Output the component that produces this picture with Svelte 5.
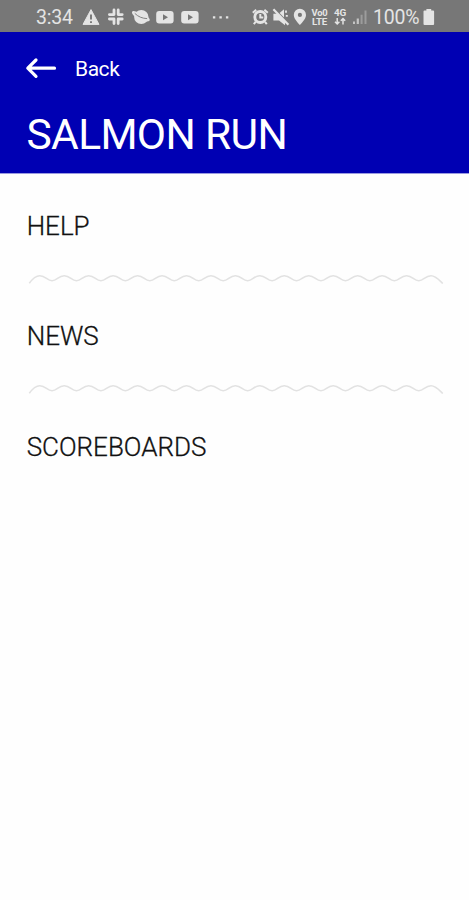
<script lang="ts">
  const items = ["HELP", "NEWS", "SCOREBOARDS"];

  const period = 24.45;
  const humps = 16;

  // A row of soft humps; both ends run a little below the troughs.
  function wavePath(): string {
    let d = "M1.3 10.3 C4 6.5 7 2.8 11.8 2.8";
    for (let i = 0; i < humps; i++) {
      const x = 11.8 + i * period;
      const mid = x + period / 2;
      const next = x + period;
      d += ` C${x + 6} 2.8 ${mid - 5} 7.8 ${mid} 7.8 S${next - 6} 2.8 ${next} 2.8`;
    }
    return d + " C407.8 2.8 412 8 414.8 10.5";
  }

  const wave = wavePath();
</script>

<div class="screen">
  <div class="status">
    <span class="time">3:34</span>
    <div class="notifications">
      <svg viewBox="0 0 20 20"><path d="M10 2.6 18 17.4H2Z" fill="currentColor" stroke="currentColor" stroke-linejoin="round" /><path d="M10 7.5v5M10 14.3v1.7" stroke="#777" stroke-width="1.9" /></svg>
      <svg viewBox="0 0 20 20" class="line"><path d="M8 3v4.6M3.4 7.6H8M12.2 3v4.6M12.2 7.6h4M3.4 12H8M8 12v4.6M12.2 12h4M12.2 12v4.6" stroke-width="2.8" stroke-linecap="round" /></svg>
      <svg viewBox="0 0 20 20"><ellipse cx="10.3" cy="10" rx="7.2" ry="7" fill="currentColor" /><path d="M4.8 4.6C2 3.2-.2 4.6 1.6 7.3c2.8 4 9.2 7.3 14.6 7.2 3.2-.1 3.2-2.3 1-4.3" fill="currentColor" /><path d="M3.8 6.4c3.5 3.4 7.5 5 12.3 5.2" fill="none" stroke="#777" stroke-width="0.9" /></svg>
      {#each [0, 1] as i (i)}
        <svg viewBox="0 0 20 20"><rect x="1.2" y="4" width="17.4" height="12.4" rx="3" fill="currentColor" /><path d="M8 7.3v6l5-3Z" fill="#777" /></svg>
      {/each}
      <svg viewBox="0 0 20 20" class="more"><path d="M1.9 9.2h2.4v2.4H1.9zM8.4 9.2h2.4v2.4H8.4zM14.9 9.2h2.4v2.4h-2.4z" fill="currentColor" /></svg>
    </div>
    <div class="system">
      <svg viewBox="0 0 20 20" class="line"><circle cx="9.3" cy="10" r="5.5" stroke-width="2.9" /><path d="M9.3 7v3.6h3M1.8 5.8l3.4-3M13.4 2.8l3.4 3M4.6 14.8l-1.8 2.4M14 14.8l1.8 2.4" stroke-width="2" /></svg>
      <svg viewBox="0 0 20 20"><path d="M2.4 6.8H7l7 7v4.4L8 13.4H2.4ZM8.6 6 13 2.2v8.2Z" fill="currentColor" /><path d="m2.4 2.3 15 15.4" stroke="currentColor" stroke-width="2.2" /><path d="M15 3.5v2.2M14.8 8.8h2" fill="none" stroke="currentColor" stroke-width="1.8" /></svg>
      <svg viewBox="0 0 20 20"><path fill-rule="evenodd" d="M8.9 1.8A6.1 6.1 0 0 0 2.8 7.9c0 4.3 6.1 10 6.1 10S15 12.2 15 7.9a6.1 6.1 0 0 0-6.1-6.1Zm0 4a2.1 2.1 0 1 1 0 4.2 2.1 2.1 0 0 1 0-4.2Z" fill="currentColor" /></svg>
      <svg viewBox="0 0 20 20" class="tiny"><text x="0.5" y="8.8" textLength="16" lengthAdjust="spacingAndGlyphs">Vo0</text><text x="1" y="17.8" textLength="15" lengthAdjust="spacingAndGlyphs">LTE</text></svg>
      <svg viewBox="0 0 20 20" class="tiny"><text x="3" y="9" textLength="12" lengthAdjust="spacingAndGlyphs">4G</text><path d="M6.2 11v6M4 14.8 6.2 17l2.2-2.2M12 17.5v-6M9.8 13.7l2.2-2.2 2.2 2.2" fill="none" stroke="currentColor" stroke-width="1.5" /></svg>
      <svg viewBox="0 0 20 20" class="signal"><path d="M1 14.5h2V17H1zM4.7 11.5h2.2V17H4.7z" fill="#c4c4c4" /><path d="M8.6 7.8h2V17h-2zM12.5 3.5h2V17h-2z" fill="#9c9c9c" /></svg>
    </div>
    <span class="percent">100%</span>
    <svg viewBox="0 0 12 18" class="battery"><path d="M3.4 1h4.8v1.6h1.9a1 1 0 0 1 1 1V16a1 1 0 0 1-1 1H1.5a1 1 0 0 1-1-1V3.6a1 1 0 0 1 1-1h1.9Z" fill="currentColor" /></svg>
  </div>

  <header>
    <div class="back">
      <svg viewBox="0 0 32 22" class="arrow"><path d="M29.5 11.2H3.5M11 3 2.8 11.2l8.2 8.2" /></svg>
      <span>Back</span>
    </div>
    <h1>SALMON RUN</h1>
  </header>

  <main>
    {#each items as item, i (item)}
      <div class="item">{item}</div>
      {#if i < items.length - 1}
        <svg class="wave" viewBox="0 0 416 12"><path d={wave} /></svg>
      {/if}
    {/each}
  </main>
</div>

<style>
  :global(body) {
    background: #fefefe;
  }
  .screen {
    height: 900px;
    overflow: hidden;
    font-family: Roboto, sans-serif;
    color: #111;
  }
  .status {
    box-sizing: border-box;
    display: flex;
    align-items: center;
    height: 32px;
    padding: 2px 0 0 36px;
    background: #777;
    color: #e4e4e4;
    font-size: 19.5px;
    letter-spacing: -0.2px;
  }
  .status svg {
    flex: none;
    width: 20px;
    height: 20px;
  }
  .status .line {
    fill: none;
    stroke: currentColor;
  }
  .time {
    width: 45px;
    flex: none;
  }
  .notifications {
    display: flex;
    gap: 4.8px;
    width: 170px;
    flex: none;
  }
  .notifications .more {
    margin-left: 6px;
  }
  .system {
    display: flex;
    width: 122px;
    flex: none;
  }
  .tiny {
    fill: currentColor;
    font-size: 9px;
    font-weight: 700;
  }
  .system .signal {
    margin-left: 1px;
  }
  .percent {
    width: 50px;
    flex: none;
  }
  .status .battery {
    width: 12px;
    height: 18px;
  }
  header {
    box-sizing: border-box;
    height: 142px;
    padding: 22px 26px 0;
    background: #0000b3;
    border-bottom: 1px solid #9a9ae0;
    color: #fff;
  }
  .back {
    display: flex;
    align-items: center;
    height: 28px;
    font-size: 21px;
    letter-spacing: -0.45px;
  }
  .arrow {
    width: 32px;
    height: 22px;
    margin: 0 18px 0 -1px;
    fill: none;
    stroke: #fff;
    stroke-width: 3.2;
    stroke-linecap: round;
    stroke-linejoin: round;
  }
  .back span {
    padding-top: 1px;
  }
  h1 {
    margin: 28px 0 0 0.5px;
    font-size: 42.5px;
    line-height: 50px;
    font-weight: 400;
    letter-spacing: -0.65px;
    white-space: nowrap;
  }
  main {
    padding: 35.5px 26px 0 26.7px;
  }
  .item {
    height: 32px;
    line-height: 32px;
    font-size: 26px;
    font-weight: 300;
    -webkit-text-stroke: 0.3px #111;
  }
  .wave {
    display: block;
    width: 416px;
    height: 12px;
    margin: 31px 0 35.7px 1.3px;
    fill: none;
    stroke: #e2e2e2;
    stroke-width: 1.6;
  }
</style>
